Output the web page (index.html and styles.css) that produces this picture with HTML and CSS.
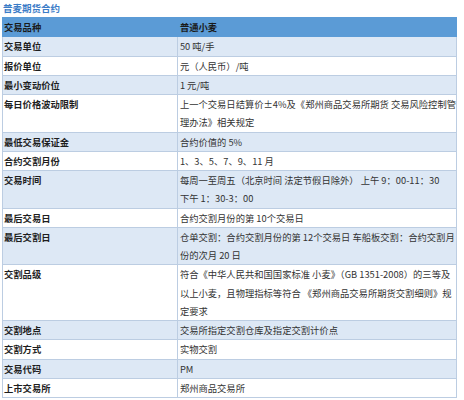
FILE: index.html
```html
<!DOCTYPE html>
<html lang="zh-CN">
<head>
<meta charset="utf-8">
<title>普麦期货合约</title>
<link rel="stylesheet" href="styles.css">
</head>
<body>
<div class="page">
  <div class="title">普麦期货合约</div>
  <table class="spec">
    <tr class="head"><td class="k">交易品种</td><td class="v">普通小麦</td></tr>
    <tr class="alt"><td class="k">交易单位</td><td class="v">50 吨/手</td></tr>
    <tr><td class="k">报价单位</td><td class="v">元（人民币）/吨</td></tr>
    <tr class="alt"><td class="k">最小变动价位</td><td class="v">1 元/吨</td></tr>
    <tr><td class="k">每日价格波动限制</td><td class="v">上一个交易日结算价±4%及《郑州商品交易所期货 交易风险控制管<br>理办法》相关规定</td></tr>
    <tr class="alt"><td class="k">最低交易保证金</td><td class="v">合约价值的 5%</td></tr>
    <tr><td class="k">合约交割月份</td><td class="v">1、3、5、7、9、11 月</td></tr>
    <tr class="alt"><td class="k">交易时间</td><td class="v">每周一至周五（北京时间 法定节假日除外） 上午 9：00-11：30<br>下午 1：30-3：00</td></tr>
    <tr><td class="k">最后交易日</td><td class="v">合约交割月份的第 10个交易日</td></tr>
    <tr class="alt"><td class="k">最后交割日</td><td class="v">仓单交割：合约交割月份的第 12个交易日 车船板交割：合约交割月<br>份的次月 20 日</td></tr>
    <tr><td class="k">交割品级</td><td class="v">符合《中华人民共和国国家标准 小麦》（GB 1351-2008）的三等及<br>以上小麦，且物理指标等符合 《郑州商品交易所期货交割细则》规<br>定要求</td></tr>
    <tr class="alt"><td class="k">交割地点</td><td class="v">交易所指定交割仓库及指定交割计价点</td></tr>
    <tr><td class="k">交割方式</td><td class="v">实物交割</td></tr>
    <tr class="alt"><td class="k">交易代码</td><td class="v">PM</td></tr>
    <tr><td class="k">上市交易所</td><td class="v">郑州商品交易所</td></tr>
  </table>
</div>
</body>
</html>
```
FILE: styles.css
```css
html, body {
  margin: 0;
  padding: 0;
  background: #ffffff;
}
.page {
  padding: 0 7px 0 2px;
  font-family: "Noto Sans CJK SC", "Noto Sans", sans-serif;
  color: #222222;
}
.title {
  height: 17px;
  line-height: 17px;
  padding-left: 1px;
  font-size: 9.5px;
  font-weight: bold;
  color: #3b7cc7;
}
.spec {
  width: 455px;
  border-collapse: collapse;
  font-size: 9.3px;
  line-height: 18.25px;
}
.spec td {
  border: 1px solid #bccde2;
  padding: 0 0 0 1px;
  vertical-align: top;
  white-space: nowrap;
}
.spec .k {
  width: 188px;
  font-weight: bold;
  color: #1e1e1e;
}
.spec .v {
  padding-left: 2px;
  color: #333333;
}
.spec tr.head td {
  background: #5b9bd6;
  border-color: #5b9bd6;
  font-weight: bold;
  color: #1a1a1a;
}
.spec tr.alt td {
  background: #dde8f5;
}
```
